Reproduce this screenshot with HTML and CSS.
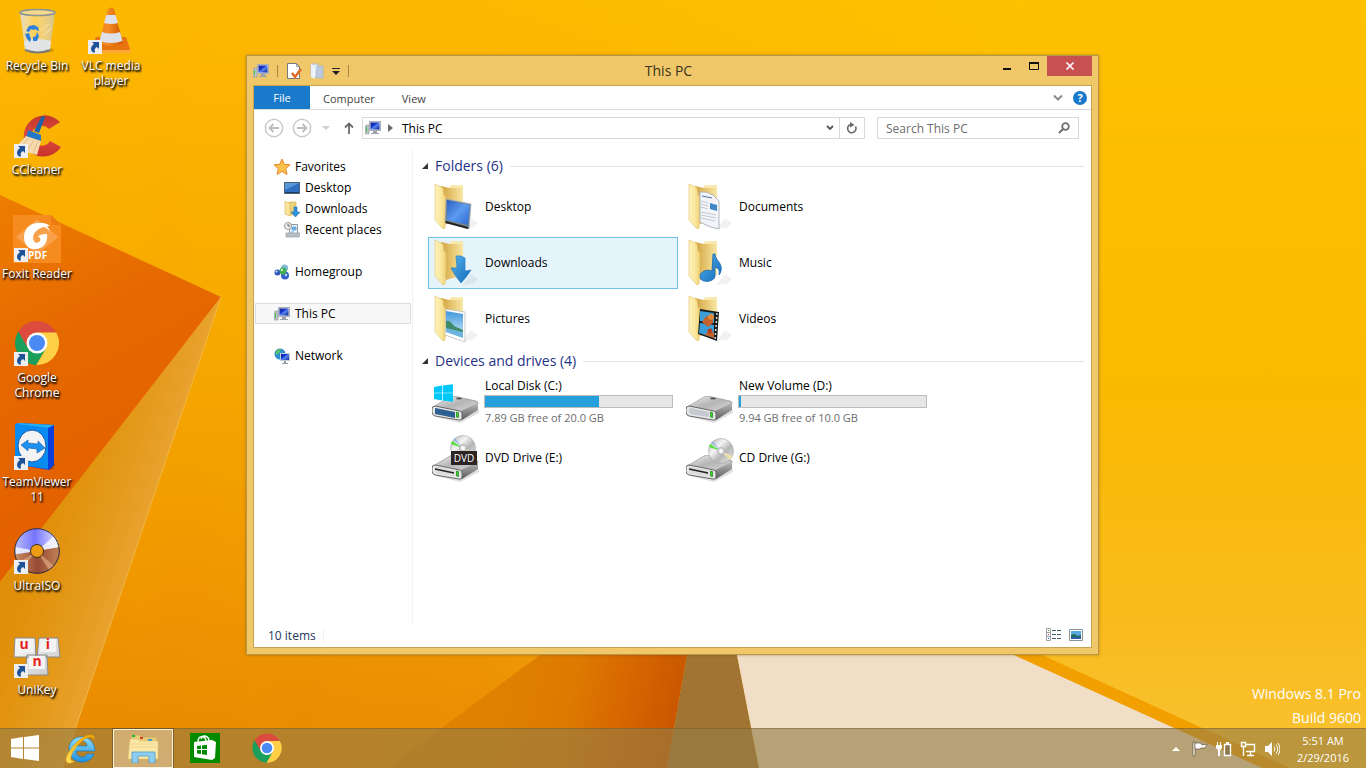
FILE: index.html
```html
<!DOCTYPE html>
<html lang="en">
<head>
    <meta charset="UTF-8">
    <meta name="viewport" content="width=device-width, initial-scale=1.0">
    <title>This PC</title>
    <link rel="stylesheet" href="styles.css">
</head>
<body>
<!-- shared icons -->
<svg class="sprite" width="0" height="0" aria-hidden="true">
    <defs>
        <linearGradient id="gFlap" x1="0" y1="0" x2="1" y2="0">
            <stop offset="0" stop-color="#fdf3c0"/><stop offset=".6" stop-color="#f9e597"/><stop offset="1" stop-color="#efd073"/>
        </linearGradient>
        <linearGradient id="gBack" x1="0" y1="0" x2="1" y2="0">
            <stop offset="0" stop-color="#d0a040"/><stop offset=".4" stop-color="#e3bf66"/><stop offset="1" stop-color="#f8e7a4"/>
        </linearGradient>
        <linearGradient id="gBlue" x1="0" y1="0" x2="1" y2="1">
            <stop offset="0" stop-color="#2a5fc0"/><stop offset=".5" stop-color="#5b9bf0"/><stop offset="1" stop-color="#2c67cf"/>
        </linearGradient>
        <linearGradient id="gArrow" x1="0" y1="0" x2="1" y2="1">
            <stop offset="0" stop-color="#55b4ee"/><stop offset="1" stop-color="#1268b8"/>
        </linearGradient>
        <linearGradient id="gSky" x1="0" y1="0" x2="0" y2="1">
            <stop offset="0" stop-color="#3f97dc"/><stop offset="1" stop-color="#d8effb"/>
        </linearGradient>
        <linearGradient id="gTop" x1="0" y1="0" x2="1" y2="1">
            <stop offset="0" stop-color="#f3f3f3"/><stop offset=".5" stop-color="#b5b5b5"/><stop offset="1" stop-color="#dadada"/>
        </linearGradient>
        <linearGradient id="gSide" x1="0" y1="0" x2="0" y2="1">
            <stop offset="0" stop-color="#b8b8b8"/><stop offset="1" stop-color="#5c5c5c"/>
        </linearGradient>
        <linearGradient id="gDisc" x1="0" y1="0" x2="1" y2="1">
            <stop offset="0" stop-color="#a9a9a9"/><stop offset=".35" stop-color="#f5f5f5"/><stop offset=".6" stop-color="#b5b5b5"/><stop offset="1" stop-color="#ececec"/>
        </linearGradient>
        <linearGradient id="gScreen" x1="0" y1="0" x2="1" y2="1">
            <stop offset="0" stop-color="#0b1c8c"/><stop offset=".45" stop-color="#1f41d8"/><stop offset=".5" stop-color="#5c8bf0"/><stop offset="1" stop-color="#0a1c98"/>
        </linearGradient>
        <linearGradient id="gCone" x1="0" y1="0" x2="1" y2="0">
            <stop offset="0" stop-color="#f08a20"/><stop offset=".4" stop-color="#f58a24"/><stop offset="1" stop-color="#cc5600"/>
        </linearGradient>
        <linearGradient id="gRed" x1="0" y1="0" x2="0" y2="1">
            <stop offset="0" stop-color="#c2362c"/><stop offset=".5" stop-color="#e04a3c"/><stop offset="1" stop-color="#c8322c"/>
        </linearGradient>
        <linearGradient id="gBin" x1="0" y1="0" x2="1" y2="0">
            <stop offset="0" stop-color="#dcdcd4" stop-opacity=".9"/><stop offset=".4" stop-color="#fff" stop-opacity=".35"/><stop offset="1" stop-color="#c9c4ae" stop-opacity=".8"/>
        </linearGradient>
        <linearGradient id="gKey" x1="0" y1="0" x2="1" y2="1">
            <stop offset="0" stop-color="#fff"/><stop offset="1" stop-color="#c4c4c4"/>
        </linearGradient>
        <linearGradient id="gIe" x1="0" y1="0" x2="0" y2="1">
            <stop offset="0" stop-color="#8fdcfb"/><stop offset="1" stop-color="#1f8fe0"/>
        </linearGradient>
        <linearGradient id="gSwoosh" x1="0" y1="0" x2="0" y2="1">
            <stop offset="0" stop-color="#f5a800"/><stop offset="1" stop-color="#ffe15a"/>
        </linearGradient>
        <linearGradient id="gUiTop" x1="0" y1="0" x2="1" y2="0">
            <stop offset="0" stop-color="#b9bdf5"/><stop offset=".45" stop-color="#7674ff"/><stop offset="1" stop-color="#e8ecfc"/>
        </linearGradient>
        <linearGradient id="gUiBottom" x1="0" y1="0" x2="1" y2="0">
            <stop offset="0" stop-color="#c98d63"/><stop offset=".5" stop-color="#974a34"/><stop offset="1" stop-color="#c08458"/>
        </linearGradient>
    </defs>

    <symbol id="shortcut" viewBox="0 0 14 14">
        <rect width="14" height="14" fill="#eceef0"/>
        <path d="M4 2h7v7L9 7c-2 1-3 2.500-2 5.500H5C2 10 2.500 6.500 6 4z" fill="#1d5298"/>
    </symbol>

    <symbol id="folder" viewBox="0 0 48 48">
        <path d="M30 46l11-1 5-5-7-5z" fill="#000" opacity=".05"/>
        <path d="M9 3l9 2 1-3h11l1 1v33l-17 5z" fill="url(#gBack)"/>
        <path d="M18 5l1-3h11l1 1v2z" fill="#f8e9b0"/>
        <path d="M3 1l8 4 1 7 2 2v17l-1 14-2 1-8-9z" fill="url(#gFlap)" stroke="#dfc069" stroke-width=".6"/>
    </symbol>

    <symbol id="drive" viewBox="0 0 48 28">
        <path d="M4 21l24 6 19-10v-3l-20 6z" fill="#000" opacity=".12"/>
        <path d="M1 11L18 1q2-1 4-1l22 5q3 1 2 3L29 16 2 12z" fill="url(#gTop)" stroke="#8d8d8d" stroke-width=".6"/>
        <ellipse cx="27" cy="2.500" rx="3" ry="1" fill="#555"/>
        <path d="M29 15L46 7v7L30 24z" fill="url(#gSide)"/>
        <path d="M3 10l25 5q2 0 2 3v4q0 3-3 2L3 20q-3-1-3-4v-3q0-3 3-3z" fill="#e6e6e6" stroke="#686868"/>
        <path d="M4 12l19 4v5L4 18q-2-3 0-6z" fill="#c5c9d0"/>
        <path d="M24.500 16l2 .5v5l-2-.5z" fill="#30e020" stroke="#0e6d0e" stroke-width=".6"/>
    </symbol>

    <symbol id="slot" viewBox="0 0 48 28">
        <use href="#drive"/>
        <path d="M3 12l20 4v5L3 18z" fill="#ddd"/>
        <path d="M3 14l19 4" stroke="#222" stroke-width="1.500"/>
    </symbol>

    <symbol id="disc" viewBox="0 0 26 26">
        <circle cx="13" cy="13" r="12.500" fill="url(#gDisc)" stroke="#a5a5a5" stroke-width=".6"/>
        <path d="M13 13L1 9l1-3z" fill="#58e03a"/>
        <path d="M13 13L3 5l2-2z" fill="#6fa8e8" opacity=".5"/>
        <path d="M13 13l11 5-2 4z" fill="#f1e0a8"/>
        <circle cx="13" cy="13" r="3.500" fill="#ddd" stroke="#999" stroke-width=".6"/>
        <circle cx="13" cy="13" r="1.500" fill="#fff"/>
    </symbol>

    <symbol id="winlogo" viewBox="0 0 28 26">
        <path d="M0 4l12-2v10.500H0zM13 2l15-2v12.500H13zM0 13.500h12V24L0 22zM13 13.500h15V26l-15-2z"/>
    </symbol>

    <symbol id="chrome" viewBox="0 0 48 48">
        <path d="M14.900 29.250L5.300 12.500A22 22 0 0 1 43.300 13.500L24 13.500z" fill="#db4c3f"/>
        <path d="M33.100 29.250L23.400 46A22 22 0 0 1 5.300 12.500L14.900 29.250z" fill="#1a9f5c"/>
        <path d="M24 13.500H43.300A22 22 0 0 1 23.400 46L33.100 29.250z" fill="#ffd045"/>
        <circle cx="24" cy="24" r="10.500" fill="#fff"/>
        <circle cx="24" cy="24" r="8" fill="#4a8af4"/>
    </symbol>

    <symbol id="pc" viewBox="0 0 16 16">
        <path d="M1 5h3v9H0V7z" fill="#bfc4cb" stroke="#8d949c" stroke-width=".6"/>
        <rect x="1" y="7" width="1" height="5" fill="#3cc43c"/>
        <rect x="4.500" y="1.500" width="11" height="9" fill="#d7dce4" stroke="#aab0ba"/>
        <rect x="5.500" y="2.500" width="9" height="7" fill="url(#gScreen)"/>
        <path d="M8 11h4v2h2v1H6v-1h2z" fill="#9ba1a8"/>
    </symbol>
</svg>

<div class="desktop">
    <svg class="wallpaper" viewBox="0 0 1366 768" preserveAspectRatio="none" aria-hidden="true">
        <defs>
            <linearGradient id="wBase" x1="0" y1="0" x2="0" y2="1">
                <stop offset="0" stop-color="#fdb900"/><stop offset=".45" stop-color="#f6a800"/><stop offset=".75" stop-color="#f09700"/><stop offset="1" stop-color="#e88800"/>
            </linearGradient>
            <linearGradient id="wRight" x1="0" y1="0" x2="0" y2="1">
                <stop offset="0" stop-color="#fdc100"/><stop offset=".5" stop-color="#fbb900"/><stop offset=".8" stop-color="#f8bb1c"/><stop offset="1" stop-color="#f9c233"/>
            </linearGradient>
            <linearGradient id="wFade" x1="0" y1="0" x2="1" y2="0">
                <stop offset="0" stop-color="#000"/><stop offset=".35" stop-color="#111"/><stop offset=".75" stop-color="#fff"/>
            </linearGradient>
            <mask id="wMask"><rect width="1366" height="768" fill="url(#wFade)"/></mask>
            <linearGradient id="wFold" x1="0" y1="0" x2=".3" y2="1">
                <stop offset="0" stop-color="#ee7d00"/><stop offset=".4" stop-color="#e66900"/><stop offset="1" stop-color="#e25e00"/>
            </linearGradient>
            <linearGradient id="wLight" gradientUnits="userSpaceOnUse" x1="30" y1="560" x2="150" y2="600">
                <stop offset="0" stop-color="#e08f08"/><stop offset=".5" stop-color="#e49a1c"/><stop offset="1" stop-color="#eca93e"/>
            </linearGradient>
            <linearGradient id="wDark" gradientUnits="userSpaceOnUse" x1="500" y1="655" x2="690" y2="700">
                <stop offset="0" stop-color="#e08200"/><stop offset=".4" stop-color="#dd7a00"/><stop offset=".65" stop-color="#d86800"/><stop offset="1" stop-color="#c75400"/>
            </linearGradient>
        </defs>
        <rect width="1366" height="768" fill="url(#wBase)"/>
        <rect width="1366" height="768" fill="url(#wRight)" mask="url(#wMask)"/>
        <path d="M0 195L221 297 0 582z" fill="url(#wFold)"/>
        <path d="M221 297L62 768H0V582z" fill="url(#wLight)"/>
        <path d="M221 297L62 768" stroke="#f3b743" fill="none"/>
        <path d="M540 655L388 768H667L687 655z" fill="url(#wDark)"/>
        <path d="M687 655L667 768H759L737 655z" fill="#a17433"/>
        <path d="M1008 655L1262 768H1290L1042 655z" fill="#f2a000"/>
        <path d="M737 655H1014L1262 768H759z" fill="#f0dec7"/>
    </svg>

    <main class="workspace">
        <nav class="shortcuts" aria-label="Desktop">
            <a class="shortcut" href="#">
                <svg class="icon-large" viewBox="0 0 48 48" aria-hidden="true">
                    <ellipse cx="29" cy="43" rx="12" ry="3" fill="#a06a00" opacity=".45"/>
                    <path d="M7 5h35l-5 37q-12 7-25 0z" fill="url(#gBin)"/>
                    <path d="M11 34q13-4 27 0l-1 9q-12 6-25 0z" fill="#e2e4e6"/>
                    <path d="M12 43q13 5 25 0" stroke="#7c7c78" stroke-width="2" fill="none"/>
                    <ellipse cx="24.500" cy="5.500" rx="17.500" ry="3" fill="#f2d98c" stroke="#8d9496" stroke-width="1.600"/>
                    <path d="M28 23l8-6M30 28l8-6" stroke="#f7dda0" stroke-width="1.500"/>
                    <path d="M13 24l3-5 5-1 2 4-3 1-2-1-2 3zM12 27l4-1 2 6-1 3-3-3zM20 34v-4l3-1 1-4 2 4-2 5zM21 18l4 2 1 4-3-1z" fill="#2f7fe0"/>
                </svg>
                <span>Recycle Bin</span>
            </a>
            <a class="shortcut" href="#">
                <svg class="icon-large" viewBox="0 0 48 48" aria-hidden="true">
                    <path d="M22 44A21 21 0 1 1 47 11L36 18A10 10 0 1 0 37 30L48 36A22 22 0 0 1 22 44z" fill="url(#gRed)"/>
                    <path d="M29 5l3 1-6 16-5-2z" fill="#1c63ab"/>
                    <path d="M15 19l13 5v6l-15-4z" fill="#2477c6"/>
                    <path d="M13 25l15 5-4 14-23-6z" fill="#f6d9ae"/>
                    <path d="M16 27L6 38M21 29L13 42M25 30l-5 13" stroke="#e3c08c" fill="none"/>
                    <use href="#shortcut" x="1" y="33" width="14" height="14"/>
                </svg>
                <span>CCleaner</span>
            </a>
            <a class="shortcut" href="#">
                <svg class="icon-large" viewBox="0 0 48 48" aria-hidden="true">
                    <path d="M0 0h38l10 10v38H0z" fill="#f68b1f"/>
                    <path d="M38 0v10h10z" fill="#ee7b10"/>
                    <path d="M24 4l21 18-21 18L3 22z" fill="#f9a04c"/>
                    <path d="M37 11C30 5 11 7 11 22c0 8 5 13 12 12 8-.5 12-7 11-15-3 0-7 0-9 3 2 0 3 2 2 4-2 3-7 2-7-3 0-7 8-12 17-12z" fill="#fff"/>
                    <path d="M28 8c4 0 8 4 9 9-2-4-6-6-10-5z" fill="#fff"/>
                    <use href="#shortcut" x="1" y="33" width="14" height="14"/>
                    <text x="15" y="44" class="pdf-text">PDF</text>
                </svg>
                <span>Foxit Reader</span>
            </a>
            <a class="shortcut" href="#">
                <svg class="icon-large" viewBox="0 0 48 48" aria-hidden="true">
                    <use href="#chrome" width="48" height="48"/>
                    <use href="#shortcut" x="1" y="33" width="14" height="14"/>
                </svg>
                <span>Google Chrome</span>
            </a>
            <a class="shortcut" href="#">
                <svg class="icon-large" viewBox="0 0 48 48" aria-hidden="true">
                    <path d="M36 46l8-7-5 8z" fill="#8d4000" opacity=".6"/>
                    <path d="M2 1l5-1 34 2v40l-5 5-34-6z" fill="#0c3ed8"/>
                    <path d="M2 1l33 4v41L2 41z" fill="#0a8bf2"/>
                    <path d="M2 1l5-1 34 2-6 3z" fill="#20b0f8"/>
                    <ellipse cx="19" cy="23" rx="14" ry="16" fill="#f3f3f3" stroke="#1458a8"/>
                    <path d="M8 22l7-5v3l10 1v-3l7 7-8 5v-4l-9-1v3z" fill="#1e90ee" stroke="#0f5fb0" stroke-width=".6"/>
                    <use href="#shortcut" x="1" y="33" width="14" height="14"/>
                </svg>
                <span>TeamViewer 11</span>
            </a>
            <a class="shortcut" href="#">
                <svg class="icon-large" viewBox="0 0 48 48" aria-hidden="true">
                    <path d="M2 28A22.500 22.500 0 1 1 46.500 20z" fill="url(#gUiTop)"/>
                    <path d="M2 28A22.500 22.500 0 0 0 46.500 20z" fill="url(#gUiBottom)"/>
                    <path d="M24 24L3 27 2 20zM24 24l17-15 5 11z" fill="#fff" opacity=".75"/>
                    <path d="M24 24l17 15-5 4zM24 24L9 41l-4-5z" fill="#e6b48c" opacity=".6"/>
                    <circle cx="24" cy="24" r="22.300" fill="none" stroke="#2e2a3a"/>
                    <circle cx="24" cy="24" r="6.500" fill="#ee9c14" stroke="#3a3020"/>
                    <use href="#shortcut" x="1" y="33" width="14" height="14"/>
                </svg>
                <span>UltraISO</span>
            </a>
            <a class="shortcut" href="#">
                <svg class="icon-large" viewBox="0 0 48 48" aria-hidden="true">
                    <path d="M2 7h20l1 19H1zM26 7h19l2 19H24zM14 24h20l1 20H12z" fill="url(#gKey)" stroke="#8a8a8a"/>
                    <path d="M4 8h16v13H4zM28 8h15v13H27zM16 25h16v13H16z" fill="#f3f3f3"/>
                    <g class="key-text">
                        <text x="11" y="18">u</text>
                        <text x="35" y="18">i</text>
                        <text x="24" y="35">n</text>
                    </g>
                    <use href="#shortcut" x="1" y="33" width="14" height="14"/>
                </svg>
                <span>UniKey</span>
            </a>
            <a class="shortcut" href="#">
                <svg class="icon-large" viewBox="0 0 48 48" aria-hidden="true">
                    <path d="M9 30h30l4 12-2 4H5l-1-4z" fill="#e87410"/>
                    <path d="M4 43h40v3H5z" fill="#ffa63c"/>
                    <path d="M21 2q3-3 6 0l9 34q-12 6-24 0z" fill="url(#gCone)"/>
                    <path d="M19.500 8h9l2.500 8q-6 2-14 0zM15 25q9 3 18 0l2.500 9q-11 4-23 0z" fill="#dfe1ea"/>
                    <use href="#shortcut" x="1" y="33" width="14" height="14"/>
                </svg>
                <span>VLC media player</span>
            </a>
        </nav>

        <section class="window" aria-label="This PC">
            <header class="titlebar">
                <div class="quick-access">
                    <svg width="16" height="16" aria-hidden="true"><use href="#pc"/></svg>
                    <i class="separator"></i>
                    <button class="tool" aria-label="Properties">
                        <svg width="16" height="18" viewBox="0 0 16 18" aria-hidden="true">
                            <path d="M1.500 1.500h9l3 3v12h-12z" fill="#fff" stroke="#777"/>
                            <path d="M10.500 1.500v3h3" fill="none" stroke="#999"/>
                            <path d="M6 11l3 4 6-8" fill="none" stroke="#e06a28" stroke-width="2.500"/>
                        </svg>
                    </button>
                    <button class="tool" aria-label="New folder">
                        <svg width="16" height="18" viewBox="0 0 16 18" aria-hidden="true">
                            <path d="M2 2h7v13H2z" fill="#e3ebf4" stroke="#b2bccb"/>
                            <path d="M8 4h6v12H7z" fill="#bccbe0" stroke="#9fb0c8" stroke-width=".6"/>
                            <path d="M2 2l4 3v12l-4-2z" fill="#eef3f9"/>
                        </svg>
                    </button>
                    <button class="tool" aria-label="Customize">
                        <svg width="8" height="8" viewBox="0 0 8 8" aria-hidden="true"><path d="M0 1h8v1H0zM0 4h8L4 8z" fill="#222"/></svg>
                    </button>
                    <i class="separator"></i>
                </div>
                <h1 class="title">This PC</h1>
                <div class="window-buttons">
                    <button class="win-btn" aria-label="Minimize"><svg width="10" height="10" aria-hidden="true"><path d="M1 7h8v2H1z" fill="#111"/></svg></button>
                    <button class="win-btn" aria-label="Maximize"><svg width="10" height="10" aria-hidden="true"><path d="M.5 2v6.500h9V2z" fill="none" stroke="#111"/><path d="M0 1h10v2H0z" fill="#111"/></svg></button>
                    <button class="win-btn close" aria-label="Close"><svg width="10" height="10" aria-hidden="true"><path d="M1.500 1.500l7 7M8.500 1.500l-7 7" stroke="#fff" stroke-width="1.600"/></svg></button>
                </div>
            </header>

            <div class="client">
                <div class="ribbon">
                    <button class="tab active">File</button>
                    <button class="tab">Computer</button>
                    <button class="tab">View</button>
                    <div class="ribbon-end">
                        <button class="tool" aria-label="Expand ribbon"><svg width="10" height="8" aria-hidden="true"><path d="M1 1.500l4 4 4-4" fill="none" stroke="#8c8c8c" stroke-width="2"/></svg></button>
                        <button class="help" aria-label="Help">?</button>
                    </div>
                </div>

                <div class="navbar">
                    <button class="tool" aria-label="Back"><svg width="20" height="20" aria-hidden="true"><circle cx="10" cy="10" r="8.700" fill="none" stroke="#c4c4c4" stroke-width="1.300"/><path d="M15 10H6M9.500 6l-4 4 4 4" fill="none" stroke="#bdbdbd" stroke-width="1.800"/></svg></button>
                    <button class="tool forward" aria-label="Forward"><svg width="20" height="20" aria-hidden="true"><circle cx="10" cy="10" r="8.700" fill="none" stroke="#c4c4c4" stroke-width="1.300"/><path d="M5 10h9M10.500 6l4 4-4 4" fill="none" stroke="#bdbdbd" stroke-width="1.800"/></svg></button>
                    <button class="tool recent" aria-label="Recent locations"><svg width="8" height="4" aria-hidden="true"><path d="M0 0h8L4 4z" fill="#cfcfcf"/></svg></button>
                    <button class="tool up" aria-label="Up"><svg width="10" height="12" aria-hidden="true"><path d="M5 12V2M1 5.500l4-4 4 4" fill="none" stroke="#6a6a6a" stroke-width="1.800"/></svg></button>
                    <div class="address">
                        <svg width="16" height="16" aria-hidden="true"><use href="#pc"/></svg>
                        <svg width="5" height="8" aria-hidden="true"><path d="M0 0l5 4-5 4z" fill="#6a6a6a"/></svg>
                        <button class="crumb">This PC</button>
                        <button class="address-btn" aria-label="Previous locations"><svg width="8" height="6" aria-hidden="true"><path d="M1 1l3 3 3-3" fill="none" stroke="#555" stroke-width="1.800"/></svg></button>
                        <button class="address-btn refresh" aria-label="Refresh"><svg width="12" height="12" aria-hidden="true"><path d="M4.500 2.500A4.200 4.200 0 1 0 9.500 4.500" fill="none" stroke="#6a6a6a" stroke-width="1.600"/><path d="M4 0v5.500L8.500 3z" fill="#6a6a6a"/></svg></button>
                    </div>
                    <form class="search">
                        <input type="search" placeholder="Search This PC" aria-label="Search This PC">
                        <svg width="12" height="12" aria-hidden="true"><circle cx="7.500" cy="4.500" r="3.300" fill="none" stroke="#6e6e6e" stroke-width="1.800"/><path d="M5 7l-4 4" stroke="#6e6e6e" stroke-width="2"/></svg>
                    </form>
                </div>

                <div class="content">
                    <nav class="sidebar" aria-label="Navigation pane">
                        <ul>
                            <li><a href="#">
                                <svg width="16" height="16" aria-hidden="true"><path d="M8 0l2.300 5.300 5.700.5-4.300 3.800 1.300 5.900L8 12.400 3 15.500l1.300-5.900L0 5.800l5.700-.5z" fill="#fcc14a" stroke="#e5872a"/></svg>
                                Favorites</a></li>
                            <li class="sub"><a href="#">
                                <svg width="16" height="16" aria-hidden="true"><path d="M.5 2.500h15v11H.5z" fill="#2f6fc0" stroke="#4b6076"/><path d="M1 3h14L1 10z" fill="#6aa9e4" opacity=".7"/><path d="M1 12h14v1H1z" fill="#1d3a60"/></svg>
                                Desktop</a></li>
                            <li class="sub"><a href="#">
                                <svg width="16" height="16" aria-hidden="true"><path d="M5 1h7v13H5z" fill="#ecd07c" stroke="#d3ae4c" stroke-width=".6"/><path d="M1 0l5 3v12l-5-2z" fill="#f9e59d" stroke="#d3ae4c" stroke-width=".6"/><path d="M10 6h3v5h3l-4.500 5L7 11h3z" fill="#2b92dc" stroke="#1c74b8" stroke-width=".6"/></svg>
                                Downloads</a></li>
                            <li class="sub"><a href="#">
                                <svg width="16" height="16" aria-hidden="true"><path d="M5.500 2.500h8v11h-8z" fill="#f4f7fa" stroke="#8e979f"/><path d="M2 11h14l-1 4H2z" fill="#b8bec4" stroke="#8e979f" stroke-width=".6"/><path d="M8 5h4v3H8zM7 10h3" fill="#6caee0" stroke="#6caee0"/><circle cx="4" cy="4" r="3.500" fill="#eee" stroke="#9a9a9a"/><path d="M4 2v2h2" fill="none" stroke="#666"/></svg>
                                Recent places</a></li>
                            <li class="root"><a href="#">
                                <svg width="16" height="16" aria-hidden="true"><circle cx="10.500" cy="4" r="3.500" fill="#7fb8d8"/><circle cx="3.500" cy="8.500" r="3" fill="#2e58c0"/><circle cx="11" cy="11.500" r="4" fill="#3563cc"/><circle cx="9" cy="7" r="3.500" fill="#3fae4c"/><circle cx="2.500" cy="7.500" r="1" fill="#cfe2ff"/><circle cx="8" cy="6" r="1.200" fill="#c8f0c8"/><circle cx="12" cy="11" r="1.300" fill="#b8ccf8"/></svg>
                                Homegroup</a></li>
                            <li class="root selected"><a href="#">
                                <svg width="16" height="16" aria-hidden="true"><use href="#pc"/></svg>
                                This PC</a></li>
                            <li class="root"><a href="#">
                                <svg width="16" height="16" aria-hidden="true"><circle cx="6" cy="6" r="5.500" fill="#2c8fd0"/><path d="M2 3q3-3 5-1L5 5 2 7zM6 6l4-1 1 3-4 3z" fill="#5cc45c"/><rect x="6.500" y="5.500" width="9" height="7" fill="url(#gScreen)" stroke="#c4ccd8"/><path d="M10 13h2v2h2v1H8v-1h2z" fill="#8f98a3"/></svg>
                                Network</a></li>
                        </ul>
                    </nav>

                    <div class="items">
                        <h2 class="group">Folders (6)</h2>
                        <div class="tiles">
                            <a class="tile" href="#">
                                <svg class="icon-large" viewBox="0 0 48 48" aria-hidden="true"><use href="#folder"/><path d="M14 16l25 5-2 25-24-7z" fill="#77828d" stroke="#a5b0ba" stroke-width=".7"/><path d="M15 17l23 5-2 20-21-5z" fill="url(#gBlue)"/><path d="M14 38l22 6v2l-23-6z" fill="#222"/></svg>
                                <span>Desktop</span>
                            </a>
                            <a class="tile" href="#">
                                <svg class="icon-large" viewBox="0 0 48 48" aria-hidden="true"><use href="#folder"/><path d="M14 9q6-1 13 3l6 6v28q-9-1-19-7z" fill="#f2f4f8" stroke="#b0b5bd"/><path d="M16 13l10 2" stroke="#4a72a8"/><path d="M15 18l7 2M15 21l7 2M15 24l7 2M15 29l15 3M15 32l15 3M15 35l14 3" stroke="#c3c8d2" fill="none"/><path d="M24 20l7 2v6l-7-2z" fill="#3f86c8"/></svg>
                                <span>Documents</span>
                            </a>
                            <a class="tile hover" href="#">
                                <svg class="icon-large" viewBox="0 0 48 48" aria-hidden="true"><use href="#folder"/><path d="M24 17q5-1 9 2v13l6-1q-5 8-10 13-6-7-10-15h6z" fill="url(#gArrow)" stroke="#2a7fc4" stroke-width=".7"/></svg>
                                <span>Downloads</span>
                            </a>
                            <a class="tile" href="#">
                                <svg class="icon-large" viewBox="0 0 48 48" aria-hidden="true"><use href="#folder"/><path d="M27 15h2c0 6 8 9 6 17-1 3-2 4-2 4 1-5-1-7-4-8v9c0 6-14 8-15 1 0-6 7-8 12-6z" fill="url(#gArrow)" stroke="#1b67ae" stroke-width=".8"/></svg>
                                <span>Music</span>
                            </a>
                            <a class="tile" href="#">
                                <svg class="icon-large" viewBox="0 0 48 48" aria-hidden="true"><use href="#folder"/><path d="M14 14l19 3v30l-20-7z" fill="#fff" stroke="#b5b5b5" stroke-width=".7"/><path d="M14 16l17 3v24l-17-6z" fill="url(#gSky)"/><path d="M14 26q4-1 8 5l9 4v5l-17-6z" fill="#3f8a68"/><path d="M14 33l17 4v6l-17-6z" fill="#6db4dc"/></svg>
                                <span>Pictures</span>
                            </a>
                            <a class="tile" href="#">
                                <svg class="icon-large" viewBox="0 0 48 48" aria-hidden="true"><use href="#folder"/><path d="M14 14l19 3-2 29-19-7z" fill="#1a1a1a"/><path d="M14 16l14 2v10l-14-2zM14 28l14 2v13l-15-5z" fill="#3a9fd8"/><path d="M16 27l4-6 4 2 3-3v8l-5 4zM19 40l4-5 5 3v5z" fill="#c4622a"/><circle cx="25" cy="22" r="3" fill="#e08a35"/><circle cx="24" cy="36" r="2.500" fill="#b8401e"/><path d="M31 18l-2 27" stroke="#ddd" stroke-width="1.500" stroke-dasharray="2 2"/></svg>
                                <span>Videos</span>
                            </a>
                        </div>

                        <h2 class="group">Devices and drives (4)</h2>
                        <div class="tiles">
                            <a class="tile" href="#">
                                <svg class="icon-large" viewBox="0 0 48 48" aria-hidden="true"><use href="#drive" y="18" width="48" height="28"/><path d="M3 30l20 4v6L3 36z" fill="#2d5f92"/><use href="#winlogo" x="2" y="6" width="19" height="18" fill="#00c8fa"/></svg>
                                <span class="drive-info">
                                    <span class="name">Local Disk (C:)</span>
                                    <span class="bar"><span class="bar-fill" style="width: 61%"></span></span>
                                    <span class="free">7.89 GB free of 20.0 GB</span>
                                </span>
                            </a>
                            <a class="tile" href="#">
                                <svg class="icon-large" viewBox="0 0 48 48" aria-hidden="true"><use href="#drive" y="18" width="48" height="28"/></svg>
                                <span class="drive-info">
                                    <span class="name">New Volume (D:)</span>
                                    <span class="bar"><span class="bar-fill" style="width: 1%"></span></span>
                                    <span class="free">9.94 GB free of 10.0 GB</span>
                                </span>
                            </a>
                            <a class="tile" href="#">
                                <svg class="icon-large" viewBox="0 0 48 48" aria-hidden="true"><use href="#slot" y="21" width="48" height="28"/><use href="#disc" x="18" y="1" width="26" height="26"/><rect x="19" y="17" width="26" height="14" fill="#2b2422"/><text x="32" y="28" class="dvd-text">DVD</text></svg>
                                <span>DVD Drive (E:)</span>
                            </a>
                            <a class="tile" href="#">
                                <svg class="icon-large" viewBox="0 0 48 48" aria-hidden="true"><use href="#slot" y="21" width="48" height="28"/><use href="#disc" x="22" y="4" width="26" height="26"/></svg>
                                <span>CD Drive (G:)</span>
                            </a>
                        </div>
                    </div>
                </div>

                <footer class="statusbar">
                    <span class="count">10 items</span>
                    <div class="views">
                        <button class="tool" aria-label="Details view"><svg width="16" height="14" aria-hidden="true"><path d="M.5.500h4v12h-4zM.5 4.500h4M.5 8.500h4" fill="#fff" stroke="#9aa0a8"/><path d="M2 2h1v1H2z" fill="#2b9a2b"/><path d="M2 6h1v1H2z" fill="#d03030"/><path d="M2 10h1v1H2z" fill="#3050d0"/><path d="M6 2.500h4M11 2.500h4M6 6.500h4M11 6.500h4M6 10.500h4M11 10.500h4" stroke="#44606c"/></svg></button>
                        <button class="tool" aria-label="Large icons view"><svg width="14" height="12" aria-hidden="true"><path d="M.5.500h13v11H.5z" fill="#fff" stroke="#8a929c"/><path d="M2 2h10v8H2z" fill="#58a8e4"/><path d="M2 6l3-1 4 2 3-1v4H2z" fill="#226a50"/><path d="M2 8h10v2H2z" fill="#2c5fa8"/></svg></button>
                    </div>
                </footer>
            </div>
        </section>

        <p class="watermark">Windows 8.1 Pro<br>Build 9600</p>
    </main>

    <footer class="taskbar">
        <button class="start" aria-label="Start"><svg width="28" height="26" aria-hidden="true"><use href="#winlogo" fill="#fff"/></svg></button>
        <button class="task" aria-label="Internet Explorer">
            <svg width="32" height="32" viewBox="0 0 32 32" aria-hidden="true">
                <path d="M30 19H11c0 7 9 8 11 3h7C25 34 4 33 4 17S29 0 30 19zM11 14h11c0-7-11-7-11 0z" fill="url(#gIe)" stroke="#1878c0" stroke-width=".7" fill-rule="evenodd"/>
                <path d="M29 8c2-9-10-5-18 3S-2 29 3 31c2 1 5-1 7-2-3 0-5 0-4-4 1-6 9-16 16-19 4-2 6-1 7 2z" fill="url(#gSwoosh)" stroke="#d99400" stroke-width=".4"/>
            </svg>
        </button>
        <button class="task open" aria-label="File Explorer">
            <svg width="32" height="30" viewBox="0 0 32 30" aria-hidden="true">
                <path d="M4 2h9l1 2h16v22H4z" fill="#e9cb77" stroke="#c9a650" stroke-width=".6"/>
                <path d="M5 2h3v2H5z" fill="#19b83a"/><path d="M13 4h3v2h-3z" fill="#d83a2a"/><path d="M21 6h4v2h-4z" fill="#2a9be0"/>
                <path d="M3 6h8l1 2h19v18H1z" fill="#fbe8a8" stroke="#dcc06c" stroke-width=".6"/>
                <path d="M2 11h28M2 14h28" stroke="#efd487"/>
                <path d="M5 19h23v11h-6v-7H11v7H5z" fill="#8fcdf0" stroke="#4c9ed0" stroke-width=".8"/>
            </svg>
        </button>
        <button class="task" aria-label="Store">
            <svg width="30" height="30" viewBox="0 0 30 30" aria-hidden="true">
                <path d="M0 0h30v30H0z" fill="#008a00"/>
                <path d="M4 9l18-2 4 2-1 16-3 2L4 24z" fill="#fff"/>
                <path d="M8 9c0-7 7-7 8-1M11 6c2-5 8-3 8 2" fill="none" stroke="#fff" stroke-width="1.500"/>
                <path d="M7 13l4-.5V16H7zM12 12.400l5-.6V16h-5zM7 17h4v4l-4-.5zM12 17h5v5l-5-.8z" fill="#008a00"/>
            </svg>
        </button>
        <button class="task" aria-label="Google Chrome"><svg width="32" height="32" aria-hidden="true"><use href="#chrome"/></svg></button>

        <div class="tray">
            <button class="tool overflow" aria-label="Show hidden icons"><svg width="8" height="4" aria-hidden="true"><path d="M0 4h8L4 0z" fill="#fff"/></svg></button>
            <button class="tool" aria-label="Action Center"><svg width="16" height="16" aria-hidden="true"><path d="M1 1h2v14H1z" fill="#fff" stroke="#4a3c20" stroke-width=".6"/><path d="M3 2h6l1 2 5-1-2 4H9L8 8H3z" fill="#fff" stroke="#4a3c20" stroke-width=".6"/></svg></button>
            <button class="tool" aria-label="Battery"><svg width="16" height="16" aria-hidden="true"><path d="M8.500 3.500h6v11h-6z" fill="#8c774c" stroke="#fff" stroke-width="1.400"/><path d="M10 1h3v2h-3zM1 1h1v3H1zM4 1h1v3H4zM0 4h6v3l-2 2v6H2V9L0 7z" fill="#fff"/></svg></button>
            <button class="tool" aria-label="Network"><svg width="16" height="16" aria-hidden="true"><path d="M6 3.500h8.500v7H6M10.500 11v3M7 14.500h7" stroke="#fff" stroke-width="1.400" fill="none"/><path d="M1.500 1.500h4v4h-4zM3.500 6v9" stroke="#fff" stroke-width="1.400" fill="none"/></svg></button>
            <button class="tool" aria-label="Volume"><svg width="16" height="16" aria-hidden="true"><path d="M1 5h3l4-4v14l-4-4H1z" fill="#fff"/><path d="M10 5.500q2 2.500 0 5M12 3.500q3.500 4.500 0 9M14 2q4 6 0 12" fill="none" stroke="#fff"/></svg></button>
            <time class="clock" datetime="2016-02-29T05:51">5:51 AM<br>2/29/2016</time>
        </div>
    </footer>
</div>
</body>
</html>
```
FILE: styles.css
```css
* {
    box-sizing: border-box;
}

body {
    margin: 0;
    font-family: "Open Sans", "Noto Sans", sans-serif;
    font-size: 12px;
    line-height: 15px;
    color: #000;
}

button {
    font: inherit;
    color: inherit;
    border: none;
    padding: 0;
    background: none;
}

a {
    color: inherit;
    text-decoration: none;
}

svg {
    display: block;
    flex: none;
}

.sprite {
    position: absolute;
}

.icon-large {
    width: 48px;
    height: 48px;
    overflow: visible;
}

.desktop {
    position: relative;
    display: flex;
    flex-direction: column;
    height: 100vh;
    overflow: hidden;
}

.wallpaper {
    position: absolute;
    width: 100%;
    height: 100%;
}

.workspace {
    position: relative;
    flex: 1;
    min-height: 0;
}

/* desktop icons */
.shortcuts {
    display: grid;
    grid-auto-flow: column;
    grid-template-rows: repeat(auto-fill, 104px);
    grid-auto-columns: 74px;
    height: 100%;
}

.shortcut {
    display: flex;
    flex-direction: column;
    align-items: center;
    gap: 3px;
    padding-top: 7px;
    color: #fff;
    text-align: center;
    text-shadow: 1px 1px 2px #000, 1px 2px 2px #000;
}

.pdf-text {
    font: bold 10px "Open Sans", sans-serif;
    fill: #fff;
    text-shadow: none;
}

.key-text {
    font: bold 14px "Open Sans", sans-serif;
    fill: #e81c1c;
    text-anchor: middle;
    text-shadow: none;
}

.dvd-text {
    font: 10px "Open Sans", sans-serif;
    fill: #fff;
    text-anchor: middle;
}

.watermark {
    position: absolute;
    right: 5px;
    bottom: -2px;
    margin: 0;
    font-size: 14px;
    line-height: 24px;
    text-align: right;
    color: #fff;
}

/* explorer window */
.window {
    position: absolute;
    inset: 55px 267px 73px 246px;
    display: flex;
    flex-direction: column;
    padding: 0 6px 6px;
    background: #f0c869;
    border: 1px solid #b7964a;
    box-shadow: 0 0 3px rgba(90, 60, 0, 0.4);
}

.titlebar {
    display: grid;
    grid-template-columns: 1fr auto 1fr;
    height: 29px;
}

.quick-access {
    display: flex;
    align-items: center;
    gap: 8px;
}

.separator {
    width: 1px;
    height: 12px;
    background: #a5853f;
}

.quick-access .tool + .tool {
    margin-left: -1px;
}

.title {
    margin: 0;
    padding-right: 8px;
    font-size: 14px;
    font-weight: normal;
    line-height: 29px;
    color: #3b311c;
}

.window-buttons {
    display: flex;
    justify-content: flex-end;
}

.win-btn {
    display: flex;
    align-items: center;
    justify-content: center;
    width: 27px;
    height: 20px;
}

.win-btn.close {
    width: 45px;
    background: #c75050;
}

.client {
    flex: 1;
    display: flex;
    flex-direction: column;
    min-height: 0;
    background: #fff;
    border: 1px solid #c5a350;
}

.ribbon {
    display: flex;
    height: 24px;
    border-bottom: 1px solid #dadbdc;
    font-size: 11px;
    color: #444;
}

.tab {
    padding: 2px 14px 0 13px;
}

.tab.active {
    width: 56px;
    padding: 0;
    background: #1979ca;
    color: #fff;
}

.ribbon-end {
    display: flex;
    align-items: center;
    gap: 10px;
    margin-left: auto;
    padding-right: 4px;
}

.help {
    width: 14px;
    height: 14px;
    border-radius: 50%;
    background: #1979ca;
    color: #fff;
    font-weight: bold;
    line-height: 14px;
}

.navbar {
    display: flex;
    align-items: center;
    height: 36px;
    padding: 0 12px 0 10px;
}

.forward {
    margin-left: 8px;
}

.recent {
    margin-left: 10px;
}

.up {
    margin: 0 8px 0 14px;
}

.address,
.search {
    display: flex;
    align-items: center;
    height: 22px;
    border: 1px solid #d9d9d9;
}

.address {
    flex: 1;
    gap: 7px;
    padding-left: 2px;
}

.crumb {
    flex: 1;
    text-align: left;
    padding-left: 2px;
}

.address-btn {
    display: flex;
    align-items: center;
    justify-content: center;
    align-self: stretch;
    width: 12px;
}

.address-btn.refresh {
    width: 25px;
    margin-left: -4px;
    border-left: 1px solid #d9d9d9;
}

.search {
    width: 202px;
    margin-left: 12px;
    padding: 0 8px;
}

.search input {
    flex: 1;
    min-width: 0;
    border: none;
    outline: none;
    padding: 0;
    font: inherit;
    background: none;
}

.search input::placeholder {
    color: #6d6d6d;
}

.content {
    flex: 1;
    display: flex;
    min-height: 0;
    padding-top: 4px;
}

.sidebar {
    width: 159px;
    border-right: 1px solid #f2f2f2;
}

.sidebar ul {
    list-style: none;
    margin: 0;
    padding: 6px 1px 0;
}

.sidebar a {
    display: flex;
    align-items: center;
    gap: 5px;
    height: 21px;
    padding-left: 18px;
    border: 1px solid transparent;
}

.sidebar .sub a {
    padding-left: 28px;
}

.sidebar .root {
    margin-top: 21px;
}

.sidebar .selected a {
    background: #f7f7f7;
    border-color: #dedede;
}

.items {
    flex: 1;
    min-width: 0;
    padding: 4px 7px 0 9px;
}

.group {
    display: flex;
    align-items: center;
    gap: 7px;
    margin: 0;
    font-size: 14px;
    font-weight: normal;
    line-height: 24px;
    color: #1e3287;
}

.group::before {
    content: "";
    border-left: 6px solid transparent;
    border-bottom: 6px solid #333;
}

.group::after {
    content: "";
    flex: 1;
    height: 1px;
    background: #e2e2e2;
}

.tiles {
    display: grid;
    grid-template-columns: repeat(auto-fill, 250px);
    grid-auto-rows: 52px;
    gap: 4px;
    padding: 3px 6px 4px;
}

.tile {
    display: flex;
    align-items: center;
    gap: 5px;
    padding-left: 3px;
    border: 1px solid transparent;
}

.tile > span {
    padding-bottom: 2px;
}

.tile.hover {
    background: #e5f3fb;
    border-color: #70c0e7;
}

.drive-info {
    display: flex;
    flex-direction: column;
    gap: 2px;
    margin-left: -1px;
}

.name,
.free {
    padding-left: 1px;
}

.bar {
    width: 189px;
    height: 13px;
    border: 1px solid #bcbcbc;
    background: #e6e6e6;
}

.bar-fill {
    display: block;
    height: 100%;
    background: #26a0da;
}

.free {
    font-size: 11px;
    color: #6d6d6d;
}

.statusbar {
    display: flex;
    align-items: center;
    justify-content: space-between;
    height: 24px;
    padding: 0 8px 0 14px;
    color: #1e395b;
}

.count {
    padding-right: 7px;
    border-right: 1px solid #f0f0f0;
}

.views {
    display: flex;
    align-items: center;
    gap: 7px;
}

/* taskbar */
.taskbar {
    position: relative;
    display: flex;
    gap: 2px;
    height: 40px;
    background: rgba(148, 124, 69, 0.62);
    border-top: 1px solid rgba(100, 80, 40, 0.4);
}

.start,
.task {
    display: flex;
    align-items: center;
    justify-content: center;
    width: 60px;
    padding-bottom: 1px;
}

.start {
    width: 49px;
}

.task.open {
    background: rgba(245, 230, 210, 0.42);
    border: 1px solid #fbf3e0;
    outline: 1px solid rgba(80, 60, 20, 0.5);
}

.tray {
    display: flex;
    align-items: center;
    gap: 8px;
    margin-left: auto;
    padding-right: 14px;
    color: #fff;
}

.overflow {
    margin-right: 4px;
}

.clock {
    width: 58px;
    margin-left: 6px;
    font-size: 11px;
    line-height: 17px;
    text-align: center;
}
```
